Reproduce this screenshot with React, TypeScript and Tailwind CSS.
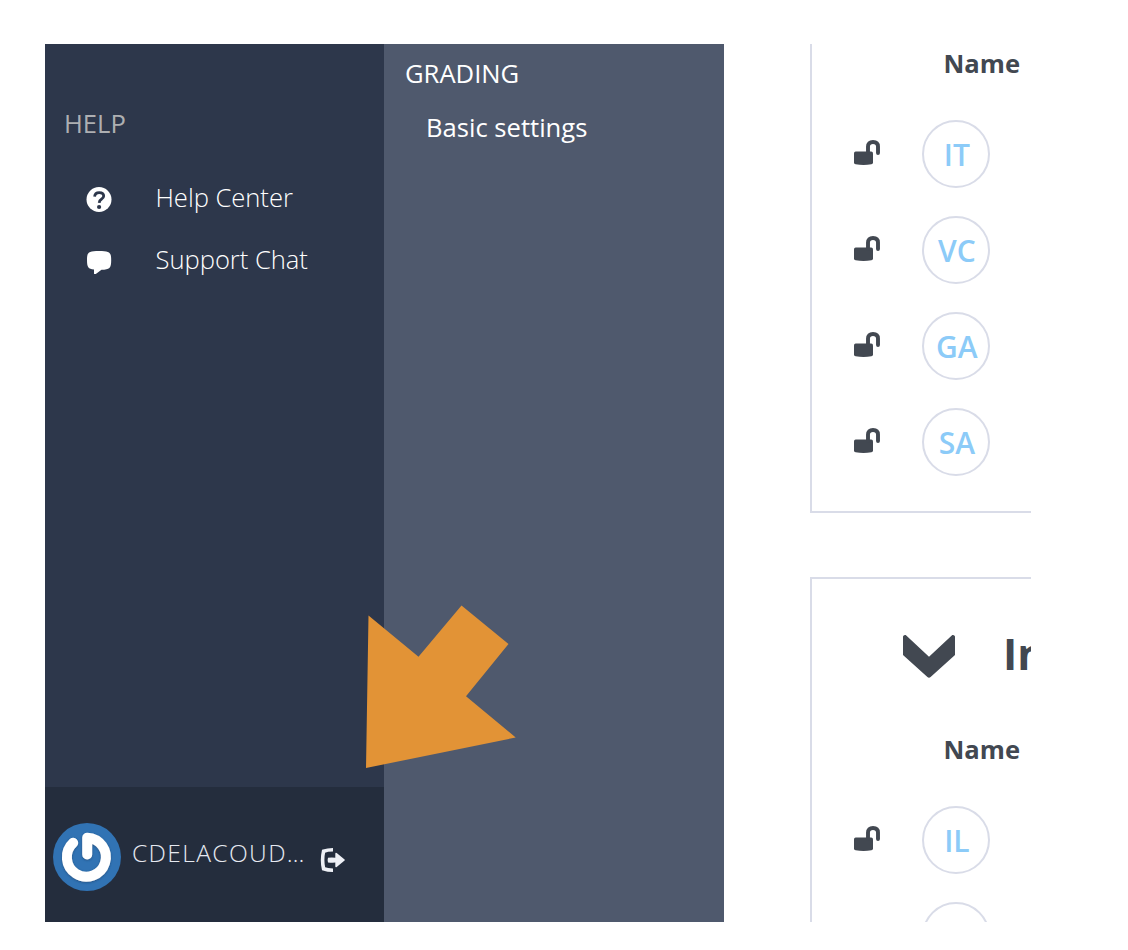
import type { ReactNode } from "react";

function LockIcon() {
  return (
    <svg viewBox="0 0 28 28" className="block h-7 w-7 shrink-0" fill="none">
      <path d="M1 14.3Q1 12.6 2.7 12.6H18.2Q20 12.6 20 14.3V23.4Q20 25 18.4 25.3Q10.5 26.5 2.6 25.3Q1 25 1 23.4Z" fill="#424851" />
      <path d="M15 14V7.6Q15 3 20 3Q25 3 25 7.6V14" stroke="#424851" strokeWidth="3.9" strokeLinecap="round" />
    </svg>
  );
}

function HelpIcon() {
  return (
    <svg viewBox="0 0 26 26" className="block h-[26px] w-[26px] shrink-0" fill="none">
      <circle cx="13" cy="13.5" r="12.5" fill="#fff" />
      <path d="M8.600 10.700Q9 6.600 13.200 6.600Q17.700 6.600 17.700 10Q17.700 11.900 15.400 13.200Q13.300 14.400 13.200 16.900" stroke="#2d374b" strokeWidth="2.800" />
      <circle cx="13.100" cy="21" r="2.100" fill="#2d374b" />
    </svg>
  );
}

function ChatIcon() {
  return (
    <svg viewBox="0 0 26 26" className="block h-[26px] w-[26px] shrink-0">
      <path d="M13 3C23.500 3 25.200 4.200 25.200 12C25.200 20.400 23.600 21.500 15.500 21.800L9.800 25.900Q8 27 8 25.200V21.500C2.200 20.900 1 19.300 1 12C1 4.200 2.500 3 13 3Z" fill="#fff" />
    </svg>
  );
}

function ExitIcon() {
  return (
    <svg viewBox="0 0 26 26" className="block h-[26px] w-[26px] shrink-0" fill="none">
      <path d="M13 2.700Q7.500 2.700 3.600 4.200Q1.600 13 3.600 21.800Q7.500 23.300 13 23.300" stroke="#eef0f6" strokeWidth="3.6" />
      <path d="M8 10.700Q12 10.400 15.300 10.700V6.400Q15.600 5.100 16.700 6L24.600 12.400Q25.200 13 24.600 13.600L16.700 20Q15.600 20.900 15.300 19.600V15.600Q12 16 8 15.400Q7.200 13 8 10.700Z" fill="#eef0f6" />
    </svg>
  );
}

function Avatar() {
  return (
    <svg viewBox="0 0 68 68" className="block h-[68px] w-[68px] shrink-0" fill="none">
      <defs>
        <filter id="soft" x="-20%" y="-20%" width="140%" height="140%">
          <feDropShadow dx="0" dy="0.8" stdDeviation="1" floodColor="#1b3d66" floodOpacity="0.65" />
        </filter>
      </defs>
      <circle cx="34" cy="34" r="34" fill="#3173b4" />
      <g filter="url(#soft)" stroke="#fff" strokeWidth="10" strokeLinecap="round" strokeLinejoin="round">
        <path d="M20.200 19.800A19.500 19.500 0 1 0 34.200 14.700V31.500" />
      </g>
    </svg>
  );
}

function MenuItem({ icon, label }: { icon: ReactNode; label: string }) {
  return (
    <a className="flex h-[62px] items-center gap-[43.500px] pl-[41px]">
      {icon}
      <span className="whitespace-nowrap pb-[3px] text-[25.600px] font-[330] leading-9 tracking-[-0.040px] text-white">{label}</span>
    </a>
  );
}

function StudentRow({ initials, locked = true }: { initials: string; locked?: boolean }) {
  return (
    <div className="flex h-24 shrink-0 items-start pl-[41px]">
      <div className="mt-[19px] h-7 w-7">{locked && <LockIcon />}</div>
      <div className="ml-[41.400px] flex h-[68px] w-[68px] items-center justify-center rounded-full border-2 border-[#d9dce8] pl-px pt-px text-[30px] font-[640] leading-none text-[#8ccbf8]">
        {initials}
      </div>
    </div>
  );
}

export default function App() {
  return (
    <div className="h-[950px] w-[1128px] overflow-hidden bg-white pl-[45px] pt-[44px] font-['Open_Sans',sans-serif]">
      <div className="relative flex h-[878px] w-[986px] overflow-hidden">
        <aside className="flex w-[339px] shrink-0 flex-col bg-[#2d374b]">
          <h2 className="mt-[62px] pl-[19px] text-[25.600px] font-normal leading-9 text-[#adafb2]">HELP</h2>
          <nav className="mt-[26px] flex flex-col">
            <MenuItem icon={<HelpIcon />} label="Help Center" />
            <MenuItem icon={<ChatIcon />} label="Support Chat" />
          </nav>
          <div className="mt-auto flex h-[135px] items-center bg-[#242d3d] pl-2 pt-[5px]">
            <Avatar />
            <span className="ml-[11px] w-[174px] whitespace-nowrap pb-[7px] text-[24.600px] font-[330] tracking-[1.350px] text-[#e6e9f1]">CDELACOUD…</span>
            <div className="ml-[14px] mt-[6px]">
              <ExitIcon />
            </div>
          </div>
        </aside>
        <section className="w-[340px] shrink-0 bg-[#4f596d] pl-[21px] pt-3 text-white">
          <h2 className="text-[25.600px] font-normal leading-9">GRADING</h2>
          <p className="mt-[18px] pl-[21px] text-[25.600px] leading-9">Basic settings</p>
        </section>
        <main className="flex min-w-0 flex-1 flex-col gap-16 pl-[86px]">
          <div className="flex h-[469px] shrink-0 flex-col border-b-2 border-l-2 border-[#d9dce8]">
            <h3 className="mb-[38px] mt-[2px] pl-[131.500px] text-[25.600px] font-bold leading-9 text-[#424851]">Name</h3>
            <StudentRow initials="IT" />
            <StudentRow initials="VC" />
            <StudentRow initials="GA" />
            <StudentRow initials="SA" />
          </div>
          <div className="flex h-[500px] shrink-0 flex-col border-l-2 border-t-2 border-[#d9dce8]">
            <div className="flex h-[153px] items-center pl-[91px]">
              <svg viewBox="0 0 52 44" className="block h-[44px] w-[52px] shrink-0">
                <path d="M0 2.500Q0.500 0.500 2.700 1L26 22.700L49.300 1Q51.500 0.500 52 2.500V21L27.600 43Q26 44.300 24.400 43L0 21Z" fill="#424851" />
              </svg>
              <h2 className="ml-[48px] whitespace-nowrap pb-[5px] text-[43px] font-bold leading-none text-[#424851]">In</h2>
            </div>
            <h3 className="mb-[38px] pl-[131.500px] text-[25.600px] font-bold leading-9 text-[#424851]">Name</h3>
            <StudentRow initials="IL" />
            <StudentRow initials="" locked={false} />
          </div>
        </main>
        <svg viewBox="0 0 150 164" className="absolute left-[320.500px] top-[560.500px] h-[164px] w-[150px]">
          <path d="M2.500 10.500L52.500 51.800L95.500 0.500L142.500 39L100 91.200L149.700 132.500L0 163Z" fill="#e29336" />
        </svg>
      </div>
    </div>
  );
}
